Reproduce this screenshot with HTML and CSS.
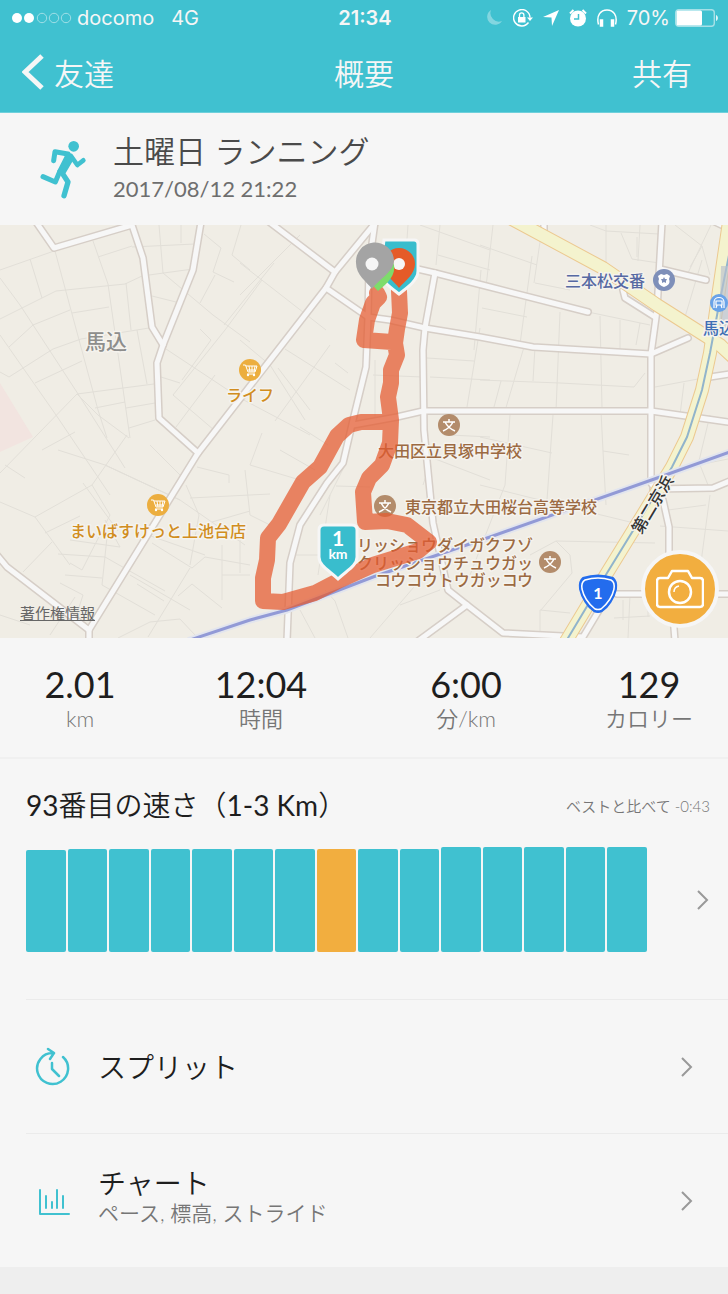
FILE: index.html
```html
<!DOCTYPE html>
<html lang="ja">
<head>
    <meta charset="UTF-8">
    <meta name="viewport" content="width=device-width, initial-scale=1.0">
    <title>概要</title>
    <link rel="stylesheet" href="styles.css">
</head>
<body>
<header class="topbar">
    <div class="status">
        <div class="status-left">
            <svg class="signal" width="60" height="12" viewBox="0 0 60 12">
                <circle cx="5" cy="6" r="5" class="fill"/>
                <circle cx="17" cy="6" r="5" class="fill"/>
                <circle cx="30" cy="6" r="4.7"/>
                <circle cx="42" cy="6" r="4.7"/>
                <circle cx="54" cy="6" r="4.7"/>
            </svg>
            <span>docomo</span>
            <span class="network">4G</span>
        </div>
        <div class="clock">21:34</div>
        <div class="status-right">
            <svg width="18" height="18" viewBox="0 0 18 18" opacity=".35"><path d="M6 1a8 8 0 1 0 11 11A8.500 8.500 0 0 1 6 1z" fill="#fff"/></svg>
            <svg width="20" height="18" viewBox="0 0 20 18"><path d="M15.500 13.500a8.200 8.200 0 1 1 1.500-5" fill="none" stroke="#fff" stroke-width="1.400"/><path d="M14 8.500h6l-3 3.500z" fill="#fff"/><rect x="5" y="8" width="7.500" height="5.500" fill="#fff"/><path d="M6.500 8V6a2.200 2.200 0 0 1 4.400 0v2" fill="none" stroke="#fff" stroke-width="1.300"/></svg>
            <svg width="16" height="16" viewBox="0 0 16 16"><path d="M16 0L9 16 8.500 7.500 0 7z" fill="#fff"/></svg>
            <svg width="18" height="18" viewBox="0 0 18 18"><circle cx="9" cy="9.500" r="8" fill="#fff"/><path d="M1 4.500L4.500 1M17 4.500L13.500 1" stroke="#fff" stroke-width="2"/><path d="M9.500 5v5H5" fill="none" stroke="#40c1d0" stroke-width="1.500"/></svg>
            <svg width="20" height="18" viewBox="0 0 20 18"><path d="M1.500 15.500C-1 6 4 1 10 1s11 5 8.500 14.500" fill="none" stroke="#fff" stroke-width="1.500"/><path d="M3.500 11H5.500v6H3.500zM14.500 11h2v6h-2z" fill="#fff" stroke="#fff" stroke-width="1.500"/></svg>
            <span>70%</span>
            <svg width="43" height="18" viewBox="0 0 43 18"><rect x=".7" y=".7" width="38.600" height="16.600" rx="3" fill="none" stroke="#a5e0e7" stroke-width="1.400"/><rect x="1.500" y="1.500" width="25.500" height="15" rx="1.500" fill="#fff"/><path d="M41 6c2.500 1 2.500 5 0 6z" fill="#e4f6f8"/></svg>
        </div>
    </div>
    <nav class="nav">
        <a href="#" class="back">
            <svg width="22" height="38" viewBox="0 0 22 38"><path d="M20 3L3 19l17 16" fill="none" stroke="#f6f6f6" stroke-width="5"/></svg>
            <span>友達</span>
        </a>
        <h1>概要</h1>
        <button type="button" class="share">共有</button>
    </nav>
</header>

<main>
    <section class="activity">
        <svg class="runner" width="52" height="62" viewBox="110 416 156 186" fill="none" stroke="#40c1d0" stroke-linecap="round" stroke-linejoin="round">
            <circle cx="220" cy="441" r="16" fill="#40c1d0" stroke="none"/>
            <path d="M160 484l4-27 39 7" stroke-width="15"/>
            <path d="M212 470l19 27 18-14" stroke-width="14"/>
            <path d="M190 460l19 5 7 16-22 38-20-4 22-44z" fill="#40c1d0" stroke-width="6"/>
            <path d="M178 517l-13 31-37-16" stroke-width="15"/>
            <path d="M181 514l22 34-12 41" stroke-width="16"/>
        </svg>
        <div>
            <h2>土曜日 ランニング</h2>
            <time datetime="2017-08-12T21:22">2017/08/12 21:22</time>
        </div>
    </section>

    <section class="map">
        <svg class="map-canvas" viewBox="0 0 728 413" preserveAspectRatio="xMidYMid slice">
            <defs>
                <g id="roads">
                    <path d="M36-3L54 23 132 0 143 33 152 102 163 120"/>
                    <path d="M201-3L193 45 163 120 157 138 159 193 198 228"/>
                    <path d="M376-3L335 47 326 63 198 228 89 405V416"/>
                    <path d="M268-4L335 47M326 63L368 92 390 95 425 103 480 112 533 122 651 129"/>
                    <path d="M375-3L369 40 368 92 366 142 353 195 350 208 343 238 327 258 300 300 290 338 287 416"/>
                    <path d="M400 40L435 48 490 62 588 87"/>
                    <path d="M435 48L425 103 423 125 424 205 433 298 448 365 467 380 503 408 583 412 607 372"/>
                    <path d="M467 380L418 416"/>
                    <path d="M353 200L397 192 423 186H651L728 197"/>
                    <path d="M662-3L657 85 651 129V258L663 275 669 302V338L675 416"/>
                    <path d="M623 65L625 73 655 92M651 129L688 113M660 44L706 55M710 152L730 149"/>
                    <path d="M653 264L713 263 730 256M617 369H730M-3 330L7 342 89 405M544-3V12M715-3L730 4"/>
                </g>
                <g id="highway">
                    <path d="M512-6L603 43 657 80 720 120 734 133"/>
                    <path d="M730-10L718 72 710 128 702 165 687 212 672 242 650 278 607 348 565 418"/>
                </g>
                <g id="cart">
                    <circle r="11" fill="#ecae3f"/>
                    <path d="M-7-5h2.500l2.500 7h7l2-6H-4M-2 0h7M-1-4l1 6M2-4v6M5-4L4 2M-3 4h8" fill="none" stroke="#fff"/>
                    <circle cx="-2" cy="5" r="1.200" fill="#fff"/><circle cx="4" cy="5" r="1.200" fill="#fff"/>
                </g>
                <g id="school">
                    <circle r="11" fill="#b38c6b"/>
                    <path d="M0-6v3M-6-3H6M-4-3Q-1 3 6 6M4-3Q1 3-6 6" fill="none" stroke="#fff" stroke-width="1.500"/>
                </g>
            </defs>
            <rect width="728" height="413" fill="#f0ede5"/>
            <path d="M0 158L33 212 0 227z" fill="#f2e4e0"/>

            <g class="lanes">
                <path d="M0 45L54 26M30 34L42 73M0 94L56 66 125 59 142 51M0 53L20 80 82 175 125 243M55 26L98 185 107 213M93 16L108 59 130 213"/>
                <path d="M33 100L70 85M9 122L33 100M9 152L53 124 81 114 149 103M0 110L56 190 110 270M35 158L82 136M9 152L0 147M72 88L109 82M98 32L132 21"/>
                <path d="M126 58L131 105M137 105L147 159M77 169L154 159M95 183L125 177M126 183L155 178M129 203L155 195M0 248L77 169M77 169L98 190 129 213"/>
                <path d="M132 22L195 19M159 0L163 48M181 0V18M149 50L193 44M152 71L176 77M163 48L213 90 250 117M204 9L221 23 213 47 234 57M241 0L232 30 250 45M215 50L200 78"/>
                <path d="M200 104L211 115 182 155M166 124L240 173 310 210M161 152L180 158M173 170L225 105 262 55M173 170L214 205M176 202L215 150M224 100L274 38"/>
                <path d="M285 124L350 165M240 38L326 105M278 143L310 185M240 115L270 140 305 195M335 138L348 148M330 120L275 196M240 70L300 10"/>
                <path d="M408 0L405 42M420 0L490 25M440 0L436 40M438 30L490 45M481 45L474 125M467 182L480 103M427 133L474 136M430 152L490 155M373 150L423 152M375 135V200"/>
                <path d="M480 20L537 40M493 0L486 62M541 10L534 58M535 58L570 65M606 0V42M482 83L527 92M588 87L650 100M620 95V131M640 98L636 120M480 155L560 158 634 162 645 148"/>
                <path d="M532 31L520 119M505 186L524 122M535 122L533 156M560 87L556 186M600 91L602 183M501 156L494 182M590 0L606 6 659 9M640 0L638 36M621 8L632 34 659 38M637 12V32"/>
                <path d="M675 0L702 21 710 50M702 21L690 42M711 0L688 48M655 162L698 154M684 158L680 190M685 92L702 35M480 260L548 277 630 297 650 280M660 301L728 306"/>
                <path d="M510 190L505 260 470 350M553 190L547 275M601 186L603 226 606 280M603 226L629 230M480 212L552 228M530 330L556 316 655 318M556 316L570 330 572 348 541 385M540 385L570 388M540 385V410"/>
                <path d="M710 190L698 240 728 234M700 240L708 260M710 270L700 345M668 285L706 280M623 375V395M630 370L628 413M614 393L650 391M648 374V392"/>
                <path d="M42 225L75 207M5 240L25 253M0 277L35 292 92 260 127 210M35 292L70 340M58 225L105 240 180 275M83 258L118 306M105 240L180 275 245 320M92 260L110 290 82 345 70 338"/>
                <path d="M45 308L80 291M58 329L105 332 165 366M107 312L102 360 155 390M23 347L52 317M70 315L120 322 105 295M65 350L102 353M60 358L83 370 75 395M0 390L30 400M50 410L75 372"/>
                <path d="M150 220L180 250M197 242L229 250V258M190 273L270 269M186 260L199 290 190 340M212 297L250 286M152 318L192 343 205 332 250 340M222 320V375M240 315V348M190 343L148 412M222 350H250"/>
                <path d="M148 310L205 330M130 350L190 385M178 371L192 359 222 383M118 413L150 397 180 394 195 410M137 359L164 376M300 202L328 220M280 225L315 245M262 208L250 240 300 255M245 245L250 290 270 300"/>
                <path d="M330 270L318 350M336 261L370 262M295 330L318 330M345 240L320 290M425 230L490 255M428 245L423 260M450 210L490 212M300 385L315 413M325 365L335 376 348 413M370 413L420 355M400 380L440 365"/>
            </g>

            <use href="#roads" class="road-edge"/>
            <use href="#roads" class="road"/>
            <use href="#highway" class="highway-edge"/>
            <use href="#highway" class="highway"/>
            <path d="M730 25L718 85 710 128 702 165 687 212 672 242 650 278 607 348 565 418" fill="none" stroke="#91b4cb" stroke-width="2"/>
            <path d="M721 41h10v67h-12z" fill="#b9c0ce" opacity=".65"/>
            <path d="M190 415L250 395 287 385 373 352 490 312 660 252 730 227" class="rail-edge"/>
            <path d="M190 415L250 395 287 385 373 352 490 312 660 252 730 227" class="rail"/>

            <g class="places">
                <text x="85" y="124" class="area">馬込</text>
                <text x="226" y="176" class="shop">ライフ</text>
                <text x="70" y="312" class="shop">まいばすけっと上池台店</text>
                <text x="565" y="62" class="police">三本松交番</text>
                <text x="703" y="109" class="station">馬込</text>
                <text x="378" y="232" class="edu">大田区立貝塚中学校</text>
                <text x="405" y="288" class="edu">東京都立大田桜台高等学校</text>
                <text x="533" y="326" text-anchor="end" class="edu">リッショウダイガクフゾ</text>
                <text x="533" y="344" text-anchor="end" class="edu">クリッショウチュウガッ</text>
                <text x="533" y="361" text-anchor="end" class="edu">コウコウトウガッコウ</text>
                <text class="street" transform="translate(641 310) rotate(-59)">第二京浜</text>
            </g>
            <use href="#cart" x="250" y="145"/>
            <use href="#cart" x="158" y="280"/>
            <use href="#school" x="449" y="200"/>
            <use href="#school" x="385" y="281"/>
            <use href="#school" x="550" y="337"/>
            <g transform="translate(664 55)">
                <circle r="11" fill="#7e8fb9"/>
                <path d="M-6-4l3-2 3 1 3-1 3 2-1 3c2 5-2 7-5 8-3-1-7-3-5-8z" fill="#fff"/>
                <path d="M0-3l1 2h2l-1 2v2l-2-1-2 1V1l-1-2h2z" fill="#7e8fb9"/>
            </g>
            <g transform="translate(719 78)">
                <circle r="9" fill="#69a3e8"/>
                <path d="M-5 5V-1c0-6 10-6 10 0v6M-3-2h6v4h-6zM-2 2l-1 3M2 2l1 3" fill="none" stroke="#fff" stroke-width="1.200"/>
            </g>

            <!-- route -->
            <path class="route" d="M377 68L379 72 373 78 367 95 364 115 392 117M399 66L400 88 397 104 395 118 397 130 391 145 391 158 388 172 391 195 390 218 382 240 369 253 363 267 365 297 387 296 407 300 429 317 418 326 373 340 340 355 315 368 283 377 263 376 263 353 267 335 268 313 279 299 303 257 320 242 337 211 349 200 361 197 391 197"/>

            <g transform="translate(598 369)">
                <path d="M-15-16Q0-21 15-16 19-13 18-5C16 4 10 13 4 17Q0 19-4 17C-10 13-16 4-18-5Q-19-13-15-16z" fill="#236ced" stroke="#236ced" stroke-width="2"/>
                <path d="M-13-14Q0-18 13-14 17-12 16-5C14 4 8 11 3 15Q0 16-3 15C-8 11-14 4-16-5Q-17-12-13-14z" fill="none" stroke="#fff" stroke-width="1.500"/>
                <text y="5" text-anchor="middle" class="shield-number">1</text>
            </g>

            <!-- 2 km marker, finish and start pins -->
            <path d="M384 15h30q4 0 4 4v27c0 9-10 16-19 23-9-7-19-14-19-23z" fill="#39bdcd" stroke="#f6f6f6" stroke-width="3"/>
            <path d="M399 63c-5-7-16-14-16-24a16 16 0 0 1 32 0c0 10-10 17-16 24z" fill="#e55b28"/>
            <circle cx="399" cy="39" r="6" fill="#f6f6f6"/>
            <path d="M378 66c-5-6-15-14-15-26a16 16 0 0 1 31 0c2 12-9 20-16 26z" fill="#7ddc6b"/>
            <path d="M372 64c-5-7-16-14-16-26a19 19 0 0 1 38-3c0 12-15 19-22 29z" fill="#a4a4a4"/>
            <circle cx="372" cy="39" r="6.500" fill="#f6f6f6"/>

            <g transform="translate(338 299)">
                <path d="M-14 1h28q5 0 5 5v27c0 9-11 14-19 22-8-8-19-13-19-22V6q0-5 5-5z" fill="#39bdcd" stroke="#f6f6f6" stroke-width="3"/>
                <text y="22" text-anchor="middle" class="marker-number">1</text>
                <text y="35" text-anchor="middle" class="marker-unit">km</text>
            </g>
        </svg>
        <a href="#" class="copyright">著作権情報</a>
        <button type="button" class="camera" aria-label="カメラ">
            <svg width="48" height="40" viewBox="0 0 48 40" fill="none" stroke="#fff" stroke-width="2.500" stroke-linejoin="round">
                <path d="M4 9h8l4-7h16l4 7h8q3 0 3 3v23q0 3-3 3H4q-3 0-3-3V12q0-3 3-3z"/>
                <circle cx="24" cy="23" r="11"/>
                <path d="M18 23q0-5 5-6" stroke-width="1.500"/>
            </svg>
        </button>
    </section>

    <dl class="stats">
        <div><dd>2.01</dd><dt>km</dt></div>
        <div><dd>12:04</dd><dt>時間</dt></div>
        <div><dd>6:00</dd><dt>分/km</dt></div>
        <div><dd>129</dd><dt>カロリー</dt></div>
    </dl>

    <section class="ranking">
        <div class="ranking-head">
            <h3><span>93</span>番目の速さ（<span>1-3 Km</span>）</h3>
            <p>ベストと比べて -0:43</p>
        </div>
        <a href="#" class="ranking-chart" aria-label="93番目の速さ">
            <div class="bars">
                <div class="bar low"></div>
                <div class="bar"></div>
                <div class="bar"></div>
                <div class="bar"></div>
                <div class="bar"></div>
                <div class="bar"></div>
                <div class="bar"></div>
                <div class="bar current"></div>
                <div class="bar"></div>
                <div class="bar"></div>
                <div class="bar high"></div>
                <div class="bar high"></div>
                <div class="bar high"></div>
                <div class="bar high"></div>
                <div class="bar high"></div>
            </div>
            <svg class="chevron" width="14" height="22" viewBox="0 0 14 22"><path d="M2 2l9 9-9 9"/></svg>
        </a>
    </section>

    <nav class="menu">
        <a href="#" class="menu-item">
            <svg class="menu-icon" width="36" height="40" viewBox="0 0 36 40">
                <path d="M28 10A15.500 15.500 0 1 1 18 6M13 2l6 4-4 6M17 16v6l7 7"/>
            </svg>
            <span class="menu-text">スプリット</span>
            <svg class="chevron" width="14" height="22" viewBox="0 0 14 22"><path d="M2 2l9 9-9 9"/></svg>
        </a>
        <a href="#" class="menu-item">
            <svg class="menu-icon" width="36" height="40" viewBox="0 0 36 40">
                <path d="M5 9v24h29M11 15v12M17 21v6M22 9v18M28 15v12" stroke-width="2"/>
            </svg>
            <span class="menu-text">チャート<small>ペース, 標高, ストライド</small></span>
            <svg class="chevron" width="14" height="22" viewBox="0 0 14 22"><path d="M2 2l9 9-9 9"/></svg>
        </a>
    </nav>
</main>
</body>
</html>
```
FILE: styles.css
```css
*{
    box-sizing: border-box;
}
html{
    background: #eee;
}
body{
    margin: 0;
    color: #1e1e1e;
    font-family: Lato, "Noto Sans CJK JP", sans-serif;
    font-weight: 400;
}
h1, h2, h3, p, dl, dd{
    margin: 0;
    font-weight: 350;
}
a{
    color: inherit;
    text-decoration: none;
}
button{
    border: 0;
    padding: 0;
    background: none;
    color: inherit;
    font: inherit;
    cursor: pointer;
}
svg{
    display: block;
    flex: none;
}

/* top bar */
.topbar{
    background: #40c1d0;
    color: #f6f6f6;
    border-bottom: 1px solid #6fd0db;
}
.status, .nav{
    display: grid;
    grid-template-columns: 1fr auto 1fr;
    align-items: center;
}
.status{
    height: 36px;
    padding: 0 10px 0 12px;
    font-family: Inter, sans-serif;
    font-size: 20px;
}
.status-left, .status-right{
    display: flex;
    align-items: center;
}
.status-left{
    gap: 5px;
}
.status-right{
    justify-content: flex-end;
    gap: 10px;
}
.status-right span{
    margin-right: -5px;
}
.network{
    margin-left: 12px;
}
.clock{
    font-weight: 600;
}
.signal{
    fill: none;
    stroke: #a0dfe7;
}
.signal .fill{
    fill: #fff;
    stroke: none;
}
.nav{
    height: 76px;
    padding: 0 22px 4px;
    font-size: 30px;
    font-weight: 350;
}
.nav h1{
    font-size: 30px;
}
.back{
    display: flex;
    align-items: center;
    gap: 10px;
}
.share{
    justify-self: end;
    padding-right: 14px;
}

/* activity */
main{
    background: #f6f6f6;
}
.activity{
    display: flex;
    align-items: center;
    gap: 24px;
    height: 112px;
    padding-left: 37px;
    color: #4a4a4a;
}
.activity h2{
    font-size: 31px;
    line-height: 40px;
}
.activity time{
    display: block;
    color: #6e6e6e;
    font-size: 22px;
    line-height: 36px;
}

/* map */
.map{
    position: relative;
}
.map-canvas{
    width: 100%;
    height: 413px;
}
.lanes{
    fill: none;
    stroke: #e2dfd8;
}
.road, .road-edge, .highway, .highway-edge, .rail, .rail-edge, .route{
    fill: none;
    stroke-linecap: round;
    stroke-linejoin: round;
}
.road-edge{
    stroke: #d6cec7;
    stroke-width: 8px;
}
.road{
    stroke: #f7f7f7;
    stroke-width: 5px;
}
.highway-edge{
    stroke: #ecc990;
    stroke-width: 14px;
}
.highway{
    stroke: #f4f3ce;
    stroke-width: 12px;
}
.rail-edge{
    stroke: #e2e5ee;
    stroke-width: 7px;
}
.rail{
    stroke: #929ad6;
    stroke-width: 3px;
}
.route{
    stroke: #e55a30;
    stroke-width: 16px;
    opacity: .73;
}
.places{
    font-family: "Noto Sans CJK JP", sans-serif;
    font-size: 16px;
    font-weight: 500;
    stroke: #f5f3ee;
    stroke-width: 3px;
    stroke-linejoin: round;
    paint-order: stroke;
}
.area{
    fill: #8e8e8c;
    font-size: 21px;
}
.shop{
    fill: #d18d20;
}
.police{
    fill: #5769a3;
}
.station{
    fill: #3f6fb5;
}
.edu{
    fill: #9c6a42;
}
.street{
    fill: #333;
}
.shield-number{
    fill: #fff;
    font-size: 16px;
    font-weight: 700;
}
.marker-number{
    fill: #fff;
    font-size: 21px;
    font-weight: 700;
}
.marker-unit{
    fill: #fff;
    font-size: 14px;
    font-weight: 700;
}
.copyright{
    position: absolute;
    left: 20px;
    bottom: 14px;
    color: #666;
    font-size: 15px;
    line-height: 22px;
    text-decoration: underline;
}
.camera{
    position: absolute;
    right: 9px;
    bottom: 10px;
    display: flex;
    align-items: center;
    justify-content: center;
    width: 78px;
    height: 78px;
    border: 4px solid #f6f6f6;
    border-radius: 50%;
    background: #f2ae3f;
}

/* stats */
.stats{
    display: grid;
    grid-template-columns: 160fr 202fr 208fr 158fr;
    height: 121px;
    padding-top: 24px;
    border-bottom: 2px solid #f0f0f0;
    text-align: center;
}
.stats dd{
    font-size: 36px;
    font-weight: 400;
    line-height: 44px;
}
.stats dt{
    color: #767676;
    font-size: 22px;
    font-weight: 350;
    line-height: 26px;
}

/* ranking */
.ranking{
    height: 240px;
    padding: 25px 18px 0 26px;
}
.ranking-head{
    display: flex;
    justify-content: space-between;
    align-items: center;
}
.ranking h3{
    font-size: 28px;
    line-height: 42px;
}
.ranking h3 span{
    font-weight: 400;
}
.ranking p{
    color: #767676;
    font-size: 15px;
}
.ranking-chart{
    display: flex;
    align-items: center;
    justify-content: space-between;
    gap: 49px;
    padding-top: 21px;
}
.bars{
    display: flex;
    align-items: flex-end;
    flex: 1;
    gap: 2px;
    height: 105px;
}
.bar{
    flex: 1;
    height: 103px;
    border-radius: 2px;
    background: #40c1d0;
}
.bar.low{
    height: 102px;
}
.bar.high{
    height: 105px;
}
.bar.current{
    background: #f2ae3f;
}
.chevron{
    fill: none;
    stroke: #999;
    stroke-width: 2px;
}

/* menu */
.menu{
    padding-left: 26px;
}
.menu-item{
    display: flex;
    align-items: center;
    height: 134px;
    padding: 0 34px 0 9px;
    border-top: 1px solid #ebebeb;
}
.menu-icon{
    fill: none;
    stroke: #40c1d0;
    stroke-width: 2.5px;
    stroke-linecap: round;
    stroke-linejoin: round;
}
.menu-text{
    flex: 1;
    margin-left: 27px;
    font-size: 28px;
    font-weight: 350;
    line-height: 32px;
}
.menu-text small{
    display: block;
    padding-bottom: 8px;
    color: #767676;
    font-size: 21px;
    line-height: 28px;
}
```
